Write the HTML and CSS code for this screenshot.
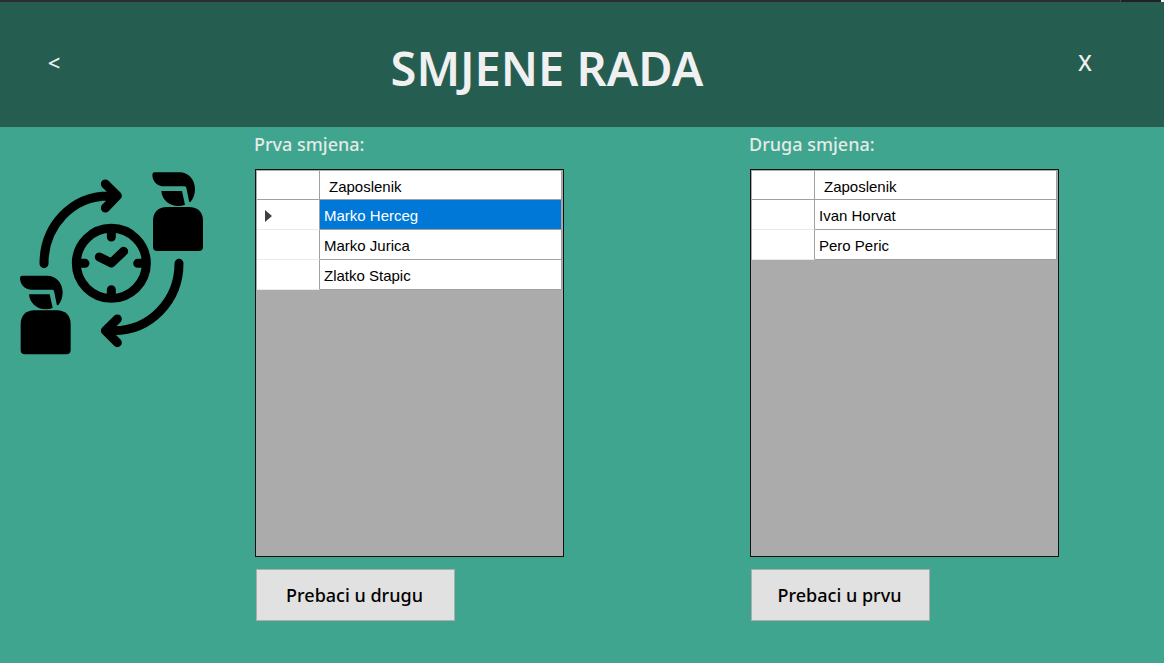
FILE: index.html
```html
<!DOCTYPE html>
<html lang="hr">
<head>
<meta charset="utf-8">
<meta name="viewport" content="width=device-width, initial-scale=1">
<title>Smjene rada</title>
<link rel="stylesheet" href="styles.css">
</head>
<body>
<div class="strip"><span class="strip-main"></span><span class="strip-side"></span><span class="strip-end"></span></div>
<header class="header">
  <button class="nav-button" type="button">&lt;</button>
  <h1 class="title">SMJENE RADA</h1>
  <button class="nav-button" type="button">X</button>
</header>
<main class="content">
  <svg class="logo" viewBox="60 36 549 549" aria-hidden="true">
    <defs>
      <g id="worker">
        <path d="M457 44Q457 37 464 37H538C565 37 585 58 585 87C585 103 580 117 572 125Q567 128 567 122L559 83Q558 79 553 79H493C471 79 457 63 457 44Z"/>
        <path d="M484 93H546L555 134Q546 138 534 138C507 138 486 119 484 93Z"/>
        <path d="M459 182C459 156 476 141 500 141H568C592 141 609 156 609 182V260Q609 273 596 273H472Q459 273 459 260Z"/>
      </g>
    </defs>
    <use href="#worker"/>
    <use href="#worker" x="-397" y="310"/>
    <g class="logo-lines">
      <circle cx="334" cy="310" r="105"/>
      <path d="M334 210V231M334 389V410M234 310H255M413 310H434"/>
      <path d="M298 291L334 309L371 274"/>
      <path d="M132 311C132 198 216 108 326 108H350M316 72L352 107L316 144"/>
      <path d="M537 310C537 423 450 512 342 512H318M352 477L316 512L352 548"/>
    </g>
  </svg>
  <section class="shift">
    <h2 class="shift-title">Prva smjena:</h2>
    <div class="grid-box">
      <table class="staff">
        <thead><tr><th class="marker"></th><th class="name">Zaposlenik</th></tr></thead>
        <tbody>
          <tr class="selected"><td class="marker"><svg class="arrow" viewBox="0 0 7 12" aria-hidden="true"><path d="M0 0L7 6L0 12Z"/></svg></td><td class="name">Marko Herceg</td></tr>
          <tr><td class="marker"></td><td class="name">Marko Jurica</td></tr>
          <tr><td class="marker"></td><td class="name">Zlatko Stapic</td></tr>
        </tbody>
      </table>
    </div>
    <button class="move" type="button">Prebaci u drugu</button>
  </section>
  <section class="shift">
    <h2 class="shift-title">Druga smjena:</h2>
    <div class="grid-box">
      <table class="staff">
        <thead><tr><th class="marker"></th><th class="name">Zaposlenik</th></tr></thead>
        <tbody>
          <tr><td class="marker"></td><td class="name">Ivan Horvat</td></tr>
          <tr><td class="marker"></td><td class="name">Pero Peric</td></tr>
        </tbody>
      </table>
    </div>
    <button class="move move-short" type="button">Prebaci u prvu</button>
  </section>
</main>
</body>
</html>
```
FILE: styles.css
```css
* { box-sizing: border-box; }
body {
  margin: 0;
  min-height: 100vh;
  display: flex;
  flex-direction: column;
  background: #3fa58e;
  font-family: "Noto Sans", "Open Sans", sans-serif;
}
.strip { display: flex; height: 2px; }
.strip-main { flex: 1; background: #2d2d30; border-right: 1px solid #46464a; }
.strip-side { width: 40px; background: #222226; }
.strip-end { width: 3px; background: #f0f0f0; }
.header {
  display: grid;
  grid-template-columns: 108px 1fr 158px;
  align-items: center;
  height: 125px;
  padding-bottom: 6px;
  background: #255d50;
  color: #f0f0f0;
}
.nav-button {
  justify-self: center;
  padding: 8px;
  border: 0;
  background: none;
  color: inherit;
  font: 500 22px/28px "Noto Sans", "Open Sans", sans-serif;
}
.title {
  margin: 0;
  padding: 12px 20px 0 0;
  font-size: 47px;
  font-weight: 600;
  line-height: 60px;
  text-align: center;
}
.content {
  flex: 1;
  display: grid;
  grid-template-columns: 254px 495fr 415fr;
  align-items: start;
}
.logo { width: 183px; margin: 45px 0 0 20px; }
.logo-lines {
  fill: none;
  stroke: #000;
  stroke-width: 27px;
  stroke-linecap: round;
  stroke-linejoin: round;
}
.shift { padding-top: 4px; }
.shift-title {
  margin: 0 0 12px;
  color: #e4eae8;
  font-size: 18px;
  font-weight: 500;
  line-height: 26px;
}
.grid-box {
  width: 309px;
  height: 388px;
  margin: 0 0 12px 1px;
  padding: 1px;
  border: 1px solid #111;
  background: #ababab;
}
.staff {
  width: 100%;
  border-collapse: separate;
  border-spacing: 0;
  table-layout: fixed;
  font: 15px/20px "Liberation Sans", Arial, sans-serif;
  color: #000;
}
.staff th, .staff td {
  height: 30px;
  padding: 6px 4px 3px;
  background: #fff;
  border: 0 solid #a0a0a0;
  border-width: 0 1px 1px 0;
  font-weight: 400;
  text-align: left;
}
.staff th { height: 29px; padding-bottom: 2px; }
.staff .marker { width: 63px; }
.staff td.marker { padding-left: 8px; border-bottom-color: #eaeaea; }
.staff th.name { padding-left: 9px; }
.staff .selected .name { background: #0078d7; color: #fff; }
.arrow { display: block; width: 7px; height: 12px; fill: #404040; }
.move {
  display: block;
  width: 199px;
  height: 52px;
  margin-left: 2px;
  padding: 0 2px 0 0;
  border: 1px solid #adadad;
  background: #e1e1e1;
  color: #000;
  font: 500 18px/24px "Noto Sans", "Open Sans", sans-serif;
}
.move-short { width: 179px; }
```
